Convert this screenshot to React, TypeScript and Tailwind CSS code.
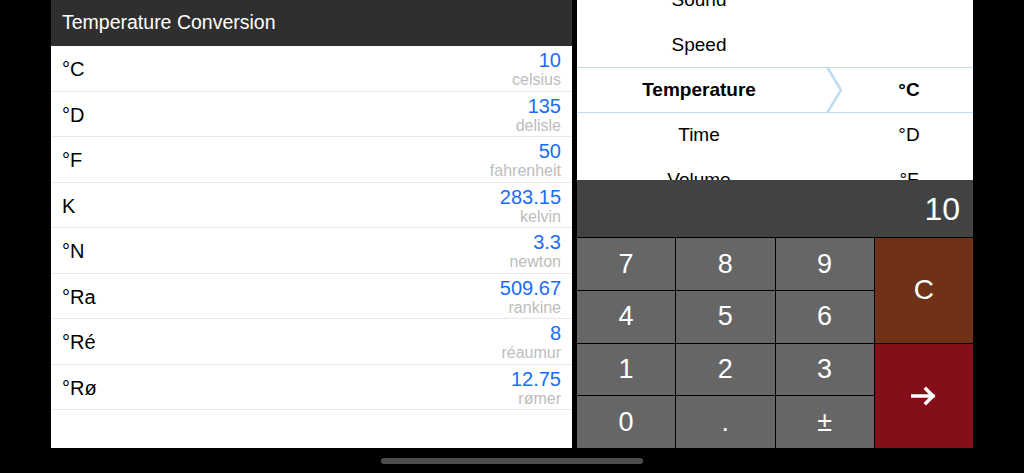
import React from 'react';

const rows = [
  { label: '°C', value: '10', name: 'celsius' },
  { label: '°D', value: '135', name: 'delisle' },
  { label: '°F', value: '50', name: 'fahrenheit' },
  { label: 'K', value: '283.15', name: 'kelvin' },
  { label: '°N', value: '3.3', name: 'newton' },
  { label: '°Ra', value: '509.67', name: 'rankine' },
  { label: '°Ré', value: '8', name: 'réaumur' },
  { label: '°Rø', value: '12.75', name: 'rømer' },
];

const categories = ['Sound', 'Speed', 'Temperature', 'Time', 'Volume'];
const units = ['', '', '°C', '°D', '°F'];

const keys = [
  ['7', '8', '9'],
  ['4', '5', '6'],
  ['1', '2', '3'],
  ['0', '.', '±'],
];

export default function App() {
  return (
    <div className="w-[1024px] h-[473px] bg-black overflow-hidden font-['Liberation_Sans',Arial,sans-serif]">
      <div className="flex h-[448px]">
        {/* conversion list */}
        <div className="ml-[51px] w-[521px] h-full bg-white flex flex-col">
          <div className="h-[46px] shrink-0 bg-[#2f2f2f] text-white text-[19.5px] flex items-center px-[11px]">
            Temperature Conversion
          </div>
          {rows.map((r) => (
            <div key={r.name} className="h-[45.5px] shrink-0 border-b border-[#e8e8e8] flex items-center justify-between pl-[11px] pr-[11px]">
              <span className="text-[20px] text-black pt-[2px]">{r.label}</span>
              <div className="flex flex-col items-end self-start pt-[3px]">
                <span className="text-[20px] leading-[22px] text-[#1a6cf7]">{r.value}</span>
                <span className="text-[16px] leading-[18px] text-[#bdbdbd]">{r.name}</span>
              </div>
            </div>
          ))}
        </div>

        {/* picker + keypad */}
        <div className="ml-[5px] w-[396px] h-full flex flex-col">
          <div className="relative h-[180px] shrink-0 bg-white overflow-hidden">
            <div className="-mt-[22px] flex">
              <div className="w-[244px] flex flex-col">
                {categories.map((c) => (
                  <div key={c} className={`h-[45px] flex items-center justify-center text-[19px] text-black ${c === 'Temperature' ? 'font-bold' : ''}`}>
                    {c}
                  </div>
                ))}
              </div>
              <div className="flex-1 pl-[24px] flex flex-col">
                {units.map((u, i) => (
                  <div key={i} className={`h-[45px] flex items-center justify-center text-[19px] text-black ${u === '°C' ? 'font-bold' : ''}`}>
                    {u}
                  </div>
                ))}
              </div>
            </div>
            {/* selection band */}
            <div className="absolute left-0 right-0 top-[67px] h-[46px] border-y border-[#bcdcf3] pointer-events-none">
              <svg className="absolute left-[249px] -top-px" width="20" height="46" viewBox="0 0 20 46">
                <polyline points="1,0 15,23 1,46" fill="none" stroke="#bcdcf3" strokeWidth="2.5" />
              </svg>
            </div>
          </div>

          <div className="h-[57px] shrink-0 bg-[#424242] flex items-center justify-end pr-[13px] text-white text-[32px]">
            10
          </div>

          <div className="flex-1 grid grid-cols-4 grid-rows-4 gap-px bg-black pt-px">
            {keys.slice(0, 2).map((row, ri) => (
              <React.Fragment key={ri}>
                {row.map((k) => (
                  <div key={k} className="bg-[#666666] text-white text-[27px] flex items-center justify-center">{k}</div>
                ))}
                {ri === 0 && (
                  <div className="row-span-2 bg-[#703216] text-white text-[28px] flex items-center justify-center">C</div>
                )}
              </React.Fragment>
            ))}
            {keys.slice(2).map((row, ri) => (
              <React.Fragment key={ri + 2}>
                {row.map((k) => (
                  <div key={k} className="bg-[#666666] text-white text-[27px] flex items-center justify-center">{k}</div>
                ))}
                {ri === 0 && (
                  <div className="row-span-2 bg-[#850e1b] flex items-center justify-center">
                    <svg width="26" height="20" viewBox="0 0 26 20">
                      <path d="M1 10 H22 M15 3 L22 10 L15 17" fill="none" stroke="white" strokeWidth="3.5" strokeLinecap="square" />
                    </svg>
                  </div>
                )}
              </React.Fragment>
            ))}
          </div>
        </div>
      </div>

      {/* home indicator */}
      <div className="flex justify-center pt-[10px]">
        <div className="w-[262px] h-[6px] rounded-full bg-[#4d4d4d]" />
      </div>
    </div>
  );
}
